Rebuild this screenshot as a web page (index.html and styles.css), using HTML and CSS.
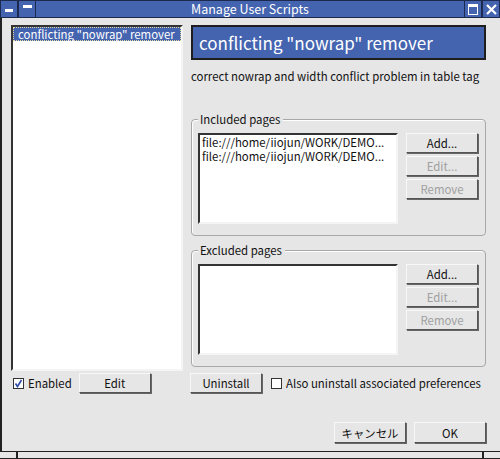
FILE: index.html
```html
<!DOCTYPE html>
<html>
<head>
<link rel="stylesheet" href="styles.css">
</head>
<body>
  <div class="window">
    <div class="titlebar">
      <div class="tb-btn"><span class="menu-bar"></span></div>
      <div class="tb-btn"><span class="shade-bar"></span></div>
      <div class="tb-title">Manage User Scripts</div>
      <div class="tb-btn"><span class="max-box"></span></div>
      <div class="tb-btn">
        <svg width="11" height="11" viewBox="0 0 11 11"><path d="M1 1L10 10M10 1L1 10" stroke="#fff" stroke-width="2.2"/></svg>
      </div>
    </div>

    <div class="content">
      <div class="script-list">
        <div class="script-item">conflicting "nowrap" remover</div>
      </div>

      <div class="details">
        <div class="script-name">conflicting "nowrap" remover</div>
        <div class="script-desc">correct nowrap and width conflict problem in table tag</div>

        <div class="group">
          <div class="group-label">Included pages</div>
          <div class="group-body">
            <div class="page-list">
              <div>file:///home/iiojun/WORK/DEMO...</div>
              <div>file:///home/iiojun/WORK/DEMO...</div>
            </div>
            <div class="page-btns">
              <button class="btn">Add...</button>
              <button class="btn" disabled>Edit...</button>
              <button class="btn" disabled>Remove</button>
            </div>
          </div>
        </div>

        <div class="group excluded">
          <div class="group-label">Excluded pages</div>
          <div class="group-body">
            <div class="page-list"></div>
            <div class="page-btns">
              <button class="btn">Add...</button>
              <button class="btn" disabled>Edit...</button>
              <button class="btn" disabled>Remove</button>
            </div>
          </div>
        </div>
      </div>

      <div class="left-row">
        <label class="check"><span class="box">
          <svg width="9" height="9" viewBox="0 0 9 9"><path d="M1.5 4.5L3.5 7.5L7.5 1" stroke="#2a4aa8" stroke-width="1.6" fill="none"/></svg>
        </span>Enabled</label>
        <button class="btn wide">Edit</button>
      </div>

      <div class="right-row">
        <button class="btn wide">Uninstall</button>
        <label class="check"><span class="box"></span>Also uninstall associated preferences</label>
      </div>
    </div>

    <div class="dialog-btns">
      <button class="btn">キャンセル</button>
      <button class="btn">OK</button>
    </div>

    <div class="statusbar">
      <div class="sb-cell first"></div>
      <div class="sb-cell mid"></div>
      <div class="sb-cell last"></div>
    </div>
  </div>
</body>
</html>
```

FILE: styles.css
```css
body {
    margin: 0;
    background: #e6e6e6;
    font-family: "Noto Sans CJK JP", "DejaVu Sans", sans-serif;
    font-size: 11.4px;
    color: #111;
}
.window {
    width: 500px;
    height: 459px;
    box-sizing: border-box;
    border-left: 2px solid #222;
    display: flex;
    flex-direction: column;
}
.titlebar {
    display: flex;
    height: 18px;
    background: #4464b0;
    margin-left: -2px;
}
.tb-btn {
    width: 16px;
    height: 16px;
    border: 1px solid #1c2a50;
    display: flex;
    align-items: center;
    justify-content: center;
}
.tb-title {
    flex: 1;
    text-align: center;
    color: #fff;
    font-size: 12.5px;
    border-top: 1px solid #1c2a50;
    border-bottom: 1px solid #1c2a50;
    line-height: 16px;
}
.menu-bar {
    width: 8px;
    height: 3px;
    background: #fff;
    margin-top: 3px;
}
.shade-bar {
    width: 9px;
    height: 3px;
    background: #fff;
    margin-top: -5px;
}
.max-box {
    width: 8px;
    height: 7px;
    border: 1px solid #fff;
    border-top-width: 3px;
}
.content {
    display: grid;
    grid-template-columns: 172px 295px;
    grid-template-rows: 346px auto;
    column-gap: 8px;
    row-gap: 2px;
    padding: 7px 0 0 9px;
}
.script-list {
    background: #fff;
    border: 2px solid #f4f4f4;
    border-top-color: #333;
    border-left-color: #333;
}
.script-item {
    background: #4464b0;
    color: #fff;
    border: 1px dotted #e0d8a0;
    padding: 0 4px;
    line-height: 12px;
}
.details {
    display: flex;
    flex-direction: column;
}
.script-name {
    height: 31px;
    background: #4464b0;
    border: 2px solid #1e1e1e;
    color: #fff;
    font-size: 17px;
    line-height: 31px;
    padding-left: 6px;
}
.script-desc {
    margin-top: 9px;
    line-height: 14px;
    height: 50px;
}
.group {
    border: 1px solid #a8a8a8;
    border-radius: 4px;
    box-shadow: inset 1px 1px 0 #fff;
    height: 117px;
    box-sizing: border-box;
    padding: 0 7px 0 6px;
}
.excluded {
    margin-top: 14px;
}
.group-label {
    width: fit-content;
    margin-top: -8px;
    padding: 0 3px 0 2px;
    background: #e6e6e6;
    line-height: 14px;
}
.group-body {
    display: flex;
    gap: 8px;
    margin-top: 7px;
}
.page-list {
    width: 200px;
    height: 91px;
    box-sizing: border-box;
    background: #fff;
    border: 2px solid #f4f4f4;
    border-top-color: #333;
    border-left-color: #333;
    padding: 0 2px;
    line-height: 14px;
    white-space: nowrap;
    overflow: hidden;
}
.page-btns {
    display: flex;
    flex-direction: column;
    gap: 3px;
}
.btn {
    width: 72px;
    height: 20px;
    box-sizing: border-box;
    background: #e6e6e6;
    border: 1px solid #555;
    border-top-color: #f8f8f8;
    border-left-color: #f8f8f8;
    box-shadow: 1px 1px 0 #666;
    font-family: inherit;
    font-size: 11.4px;
    color: #111;
    padding: 0;
}
.btn:disabled {
    color: #a0a0a0;
}
.left-row, .right-row {
    display: flex;
    align-items: center;
    height: 20px;
}
.left-row {
    margin-left: 2px;
}
.left-row .btn {
    margin-left: 7px;
}
.right-row .btn {
    margin-left: -1px;
    margin-right: 9px;
}
.check {
    display: flex;
    align-items: center;
    white-space: nowrap;
}
.box {
    width: 11px;
    height: 11px;
    box-sizing: border-box;
    background: #fff;
    border: 1px solid #333;
    margin-right: 4px;
    display: flex;
    align-items: center;
    justify-content: center;
}
.dialog-btns {
    display: flex;
    justify-content: flex-end;
    gap: 8px;
    margin: 29px 14px 0 0;
}
.dialog-btns .btn {
    height: 21px;
}
.statusbar {
    margin-top: auto;
    height: 6px;
    border-top: 1px solid #222;
    border-bottom: 1px solid #222;
    display: flex;
    margin-left: -2px;
}
.sb-cell {
    background: #e6e6e6;
    border-right: 2px solid #222;
}
.sb-cell.first { width: 16px; }
.sb-cell.mid { flex: 1; }
.sb-cell.last { width: 16px; border-right: 0; }
```
